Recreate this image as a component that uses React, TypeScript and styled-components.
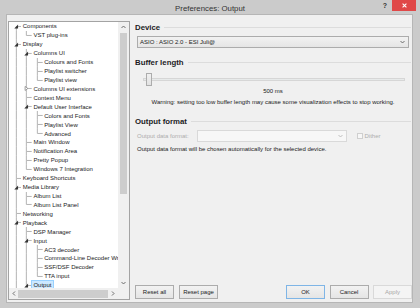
import React from 'react';
import styled, { createGlobalStyle, css } from 'styled-components';

const Global = createGlobalStyle`
  html, body { margin: 0; padding: 0; }
  body {
    width: 420px; height: 308px; overflow: hidden;
    background: #cbcbcb;
    font-family: "Liberation Sans", Arial, sans-serif;
  }
`;

const Window = styled.div`
  width: 420px; height: 308px;
  display: flex; flex-direction: column;
  background: #cbcbcb;
`;

const TitleBar = styled.div`
  height: 14px; flex: none;
  display: grid; grid-template-columns: 1fr auto 1fr; align-items: start;
`;

const Title = styled.div`
  grid-column: 2;
  font-size: 7.8px; line-height: 9px; color: #333;
  padding-top: 3.5px;
`;

const Controls = styled.div`
  grid-column: 3; justify-self: end;
  display: flex; align-items: flex-start; gap: 5px;
  margin-right: 4px;
`;

const Help = styled.div`
  font-size: 7px; font-weight: bold; color: #333; line-height: 8px;
  padding-top: 2px;
`;

const Close = styled.div`
  width: 24px; height: 11px;
  background: #e04848;
  display: flex; align-items: center; justify-content: center;
`;

const Client = styled.div`
  flex: 1; min-height: 0;
  margin: 0 7px 5px 6px;
  border: 1px solid #b6b6b6;
  background: #f0f0f0;
  padding: 6px 1px 2px 1px;
  display: grid; grid-template-columns: 122px 1fr; column-gap: 5px;
`;

const TreePanel = styled.div`
  border: 1px solid #a3a3a3;
  background: #fff;
  display: grid;
  grid-template-columns: 1fr 11px;
  grid-template-rows: 1fr 11px;
  min-height: 0;
`;

const TreeViewport = styled.div`
  overflow: hidden; min-width: 0; min-height: 0;
`;

const Row = styled.div`
  height: 8.93px; display: flex; align-items: center;
  padding-left: 1.7px;
  white-space: nowrap;
`;

const Guide = styled.svg`
  flex: none; display: block;
`;

const Label = styled.span<{ $selected?: boolean }>`
  font-size: 6px; line-height: 8px; color: #1a1a1a;
  padding: 0 1.4px; margin-left: -1px;
  border: 1px solid transparent;
  ${(p) => p.$selected && css`
    background: #cce8ff; border-color: #99d1ff;
  `}
`;

const VScroll = styled.div`
  background: #f0f0f0;
  display: flex; flex-direction: column; align-items: stretch;
`;

const HScroll = styled.div`
  background: #f0f0f0;
  display: flex; align-items: stretch;
`;

const Corner = styled.div`
  background: #f0f0f0;
`;

const ArrowBtn = styled.div<{ $w?: number; $h?: number }>`
  flex: none;
  width: ${(p) => (p.$w ? `${p.$w}px` : 'auto')};
  height: ${(p) => (p.$h ? `${p.$h}px` : 'auto')};
  display: flex; align-items: center; justify-content: center;
`;

const VThumb = styled.div`
  height: 161px; margin: 1px 2px 0 1.5px;
  background: #cdcdcd;
`;

const HThumb = styled.div`
  flex: 1; margin: 2px 0 1.5px;
  background: #cdcdcd;
`;

const Spacer = styled.div` flex: 1; `;

const Right = styled.div`
  display: flex; flex-direction: column;
  padding-top: 1px; min-height: 0;
`;

const Heading = styled.div<{ $mt?: number }>`
  display: flex; align-items: center; gap: 4px;
  height: 10px;
  margin-top: ${(p) => p.$mt ?? 0}px;
`;

const HeadingText = styled.span`
  font-size: 7.8px; font-weight: bold; color: #1c1c24;
  white-space: nowrap;
`;

const HeadingRule = styled.div`
  flex: 1; height: 1px; background: #dcdcdc;
`;

const Combo = styled.div<{ $disabled?: boolean }>`
  box-sizing: border-box;
  height: 12px;
  border: 1px solid ${(p) => (p.$disabled ? '#d9d9d9' : '#acacac')};
  background: ${(p) => (p.$disabled ? '#f7f7f7' : 'linear-gradient(#f2f2f2, #e5e5e5)')};
  display: flex; align-items: center; justify-content: space-between;
  padding: 0 3px 0 2px;
  font-size: 6px; color: #1a1a1a;
`;

const DeviceCombo = styled(Combo)`
  margin: 4px 2px 0 2px;
`;

const SliderBox = styled.div`
  position: relative;
  height: 14px; margin: 5px 6px 0 8px;
  display: flex; align-items: center;
`;

const SliderTrack = styled.div`
  flex: 1; height: 3px; box-sizing: border-box;
  border: 1px solid #d6d6d6; background: #e7eaea;
`;

const SliderThumb = styled.div`
  position: absolute; top: 0.5px;
  width: 6px; height: 13px; box-sizing: border-box;
  border: 1px solid #acacac; background: linear-gradient(#f0f0f0, #e2e2e2);
`;

const CenterText = styled.div<{ $mt: number }>`
  font-size: 6px; line-height: 8px; color: #1a1a1a;
  text-align: center; white-space: nowrap;
  margin-top: ${(p) => p.$mt}px;
`;

const FormatRow = styled.div`
  display: flex; align-items: center;
  height: 12px; margin-top: 4px; padding-left: 2px;
`;

const DisabledLabel = styled.span`
  font-size: 6px; color: #adadad; white-space: nowrap;
`;

const FormatLabel = styled(DisabledLabel)`
  width: 60px; flex: none;
`;

const FormatCombo = styled(Combo)`
  width: 150px; flex: none;
`;

const Check = styled.div`
  width: 6px; height: 6px; box-sizing: border-box;
  border: 1px solid #cfcfcf; background: #f7f7f7;
  margin: 0 1.5px 0 10px; flex: none;
`;

const InfoText = styled.div`
  font-size: 6px; line-height: 8px; color: #1a1a1a;
  margin-top: 3px; padding-left: 2px; white-space: nowrap;
`;

const ButtonRow = styled.div`
  display: flex; justify-content: space-between;
  margin: 0 -1px 1px 0;
`;

const ButtonGroup = styled.div<{ $gap: number }>`
  display: flex; gap: ${(p) => p.$gap}px;
`;

const Button = styled.div<{ $variant?: 'default' | 'disabled' }>`
  width: 39px; height: 14px; box-sizing: border-box;
  border: 1px solid #acacac;
  background: linear-gradient(#f2f2f2, #e5e5e5);
  display: flex; align-items: center; justify-content: center;
  font-size: 6px; color: #1a1a1a;
  ${(p) => p.$variant === 'default' && css`
    border-color: #7fb5e6;
  `}
  ${(p) => p.$variant === 'disabled' && css`
    border-color: #d9d9d9; background: #f4f4f4; color: #a8a8a8;
  `}
`;

type Node = { level: number; label: string; state?: 'open' | 'closed'; selected?: boolean };

const nodes: Node[] = [
  { level: 0, label: 'Components', state: 'open' },
  { level: 1, label: 'VST plug-ins' },
  { level: 0, label: 'Display', state: 'open' },
  { level: 1, label: 'Columns UI', state: 'open' },
  { level: 2, label: 'Colours and Fonts' },
  { level: 2, label: 'Playlist switcher' },
  { level: 2, label: 'Playlist view' },
  { level: 1, label: 'Columns UI extensions', state: 'closed' },
  { level: 1, label: 'Context Menu' },
  { level: 1, label: 'Default User Interface', state: 'open' },
  { level: 2, label: 'Colors and Fonts' },
  { level: 2, label: 'Playlist View' },
  { level: 2, label: 'Advanced' },
  { level: 1, label: 'Main Window' },
  { level: 1, label: 'Notification Area' },
  { level: 1, label: 'Pretty Popup' },
  { level: 1, label: 'Windows 7 Integration' },
  { level: 0, label: 'Keyboard Shortcuts' },
  { level: 0, label: 'Media Library', state: 'open' },
  { level: 1, label: 'Album List' },
  { level: 1, label: 'Album List Panel' },
  { level: 0, label: 'Networking' },
  { level: 0, label: 'Playback', state: 'open' },
  { level: 1, label: 'DSP Manager' },
  { level: 1, label: 'Input', state: 'open' },
  { level: 2, label: 'AC3 decoder' },
  { level: 2, label: 'Command-Line Decoder Wrapper' },
  { level: 2, label: 'SSF/DSF Decoder' },
  { level: 2, label: 'TTA input' },
  { level: 1, label: 'Output', state: 'open', selected: true },
  { level: 2, label: 'ASIO' },
  { level: 0, label: 'Shell Integration', state: 'open' },
  { level: 0, label: 'Tools', state: 'open' },
  { level: 0, label: 'Advanced' },
];

function hasNextAt(i: number, l: number) {
  for (let j = i + 1; j < nodes.length; j++) {
    if (nodes[j].level < l) return false;
    if (nodes[j].level === l) return true;
  }
  return false;
}

const CW = 10.7;
const CH = 8.93;
const CX = CW / 2;
const CY = CH / 2;
const LINE = '#b4b4b4';

function GuideCell({ pass, own, top, bottom, state }: {
  pass?: boolean; own?: boolean; top?: boolean; bottom?: boolean; state?: 'open' | 'closed';
}) {
  return (
    <Guide width={CW} height={CH} viewBox={`0 0 ${CW} ${CH}`}>
      {pass && <line x1={CX} y1={0} x2={CX} y2={CH} stroke={LINE} strokeWidth={1} />}
      {own && top && <line x1={CX} y1={0} x2={CX} y2={CY} stroke={LINE} strokeWidth={1} />}
      {own && bottom && <line x1={CX} y1={CY} x2={CX} y2={CH} stroke={LINE} strokeWidth={1} />}
      {own && <line x1={CX} y1={CY} x2={CW} y2={CY} stroke={LINE} strokeWidth={1} />}
      {state === 'open' && <polygon points="7.1,2.6 7.1,6.4 3.3,6.4" fill="#333" />}
      {state === 'closed' && (
        <polygon points="4.1,2.4 6.9,4.47 4.1,6.5" fill="#fff" stroke="#8a8a8a" strokeWidth={0.8} />
      )}
    </Guide>
  );
}

function Chevron({ dir }: { dir: 'up' | 'down' | 'left' | 'right' }) {
  const pts = {
    up: '0.5,3 2.5,1 4.5,3',
    down: '0.5,1 2.5,3 4.5,1',
    left: '3,0.5 1,2.5 3,4.5',
    right: '1,0.5 3,2.5 1,4.5',
  }[dir];
  const w = dir === 'up' || dir === 'down' ? 5 : 4;
  const h = dir === 'up' || dir === 'down' ? 4 : 5;
  return (
    <svg width={w} height={h} viewBox={`0 0 ${w} ${h}`}>
      <polyline points={pts} fill="none" stroke="#606060" strokeWidth={0.9} />
    </svg>
  );
}

function Tree() {
  return (
    <TreePanel>
      <TreeViewport>
        {nodes.map((n, i) => {
          const cells = [];
          for (let l = 0; l < n.level; l++) {
            cells.push(<GuideCell key={l} pass={hasNextAt(i, l)} />);
          }
          cells.push(
            <GuideCell key="own" own top={i > 0} bottom={hasNextAt(i, n.level)} state={n.state} />
          );
          return (
            <Row key={i}>
              {cells}
              <Label $selected={n.selected}>{n.label}</Label>
            </Row>
          );
        })}
      </TreeViewport>
      <VScroll>
        <ArrowBtn $h={10}><Chevron dir="up" /></ArrowBtn>
        <VThumb />
        <Spacer />
        <ArrowBtn $h={10}><Chevron dir="down" /></ArrowBtn>
      </VScroll>
      <HScroll>
        <ArrowBtn $w={9}><Chevron dir="left" /></ArrowBtn>
        <HThumb />
        <ArrowBtn $w={10}><Chevron dir="right" /></ArrowBtn>
      </HScroll>
      <Corner />
    </TreePanel>
  );
}

export default function App() {
  const buffer = 500;
  const min = 400;
  const max = 9000;
  const pct = ((buffer - min) / (max - min)) * 100;
  return (
    <>
      <Global />
      <Window>
        <TitleBar>
          <Title>Preferences: Output</Title>
          <Controls>
            <Help>?</Help>
            <Close>
              <svg width="5" height="5" viewBox="0 0 5 5">
                <path d="M0.6 0.6 L4.4 4.4 M4.4 0.6 L0.6 4.4" stroke="#fff" strokeWidth="1.1" />
              </svg>
            </Close>
          </Controls>
        </TitleBar>
        <Client>
          <Tree />
          <Right>
            <Heading>
              <HeadingText>Device</HeadingText>
              <HeadingRule />
            </Heading>
            <DeviceCombo>
              <span>ASIO : ASIO 2.0 - ESI Juli@</span>
              <Chevron dir="down" />
            </DeviceCombo>
            <Heading $mt={9}>
              <HeadingText>Buffer length</HeadingText>
              <HeadingRule />
            </Heading>
            <SliderBox>
              <SliderTrack />
              <SliderThumb style={{ left: `${pct}%` }} />
            </SliderBox>
            <CenterText $mt={1}>{buffer} ms</CenterText>
            <CenterText $mt={3}>
              Warning: setting too low buffer length may cause some visualization effects to stop working.
            </CenterText>
            <Heading $mt={10}>
              <HeadingText>Output format</HeadingText>
              <HeadingRule />
            </Heading>
            <FormatRow>
              <FormatLabel>Output data format:</FormatLabel>
              <FormatCombo $disabled>
                <span />
                <svg width="5" height="4" viewBox="0 0 5 4">
                  <polyline points="0.5,1 2.5,3 4.5,1" fill="none" stroke="#b8b8b8" strokeWidth={0.9} />
                </svg>
              </FormatCombo>
              <Check />
              <DisabledLabel>Dither</DisabledLabel>
            </FormatRow>
            <InfoText>Output data format will be chosen automatically for the selected device.</InfoText>
            <Spacer />
            <ButtonRow>
              <ButtonGroup $gap={5}>
                <Button>Reset all</Button>
                <Button>Reset page</Button>
              </ButtonGroup>
              <ButtonGroup $gap={4.5}>
                <Button $variant="default">OK</Button>
                <Button>Cancel</Button>
                <Button $variant="disabled">Apply</Button>
              </ButtonGroup>
            </ButtonRow>
          </Right>
        </Client>
      </Window>
    </>
  );
}
